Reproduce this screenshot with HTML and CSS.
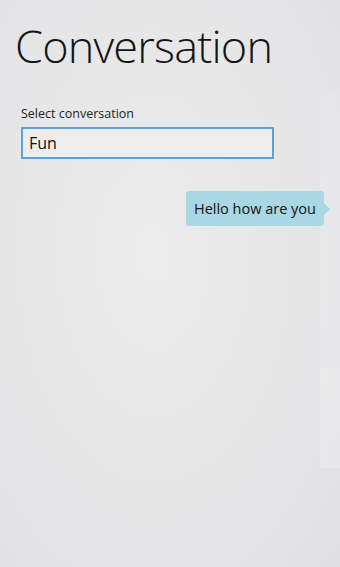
FILE: index.html
```html
<!DOCTYPE html>
<html lang="en">
<head>
    <meta charset="UTF-8">
    <meta name="viewport" content="width=device-width, initial-scale=1.0">
    <title>Conversation</title>
    <link rel="stylesheet" href="styles.css">
</head>
<body>
    <div class="page">
        <div class="side-strip"></div>
        <div class="side-strip lower"></div>
        <h1 class="title">Conversation</h1>
        <div class="picker">
            <label class="picker-label">Select conversation</label>
            <div class="picker-box">Fun</div>
        </div>
        <div class="messages">
            <div class="bubble">Hello how are you</div>
        </div>
    </div>
</body>
</html>
```

FILE: styles.css
```css
/* General styles */
html, body {
    margin: 0;
    padding: 0;
    height: 100%;
}
body {
    font-family: "Open Sans", "Noto Sans", sans-serif;
    color: #111;
    background: radial-gradient(ellipse at 45% 45%, #ececec 0%, #e5e5e7 70%, #e0e0e4 100%);
    overflow: hidden;
}
.page {
    position: relative;
    height: 567px;
    padding: 16px 0 0 15px;
    box-sizing: border-box;
}

/* faint panels at the right edge */
.side-strip {
    position: absolute;
    right: 0;
    top: 95px;
    width: 20px;
    height: 272px;
    background: rgba(255, 255, 255, 0.12);
}
.side-strip.lower {
    top: 367px;
    height: 101px;
    background: rgba(255, 255, 255, 0.2);
}

.title {
    margin: 0;
    font-size: 45px;
    font-weight: 350;
    line-height: 60px;
    letter-spacing: -0.8px;
    color: #151515;
}
.picker {
    margin: 29px 0 0 6px;
    width: 253px;
}
.picker-label {
    display: block;
    font-size: 12.5px;
    line-height: 18px;
    color: #222;
}
.picker-box {
    margin-top: 4px;
    height: 28px;
    border: 2px solid #5aa2dc;
    background: #ededee;
    padding: 0 6px;
    font-size: 16px;
    line-height: 28px;
    color: #111;
}
.messages {
    display: flex;
    justify-content: flex-end;
    margin-top: 32px;
    padding-right: 16px;
}
.bubble {
    position: relative;
    background: #a9d7e3;
    border-radius: 3px;
    padding: 0 8px;
    height: 35px;
    line-height: 35px;
    font-size: 14.5px;
    color: #151515;
}
.bubble::after {
    content: "";
    position: absolute;
    right: -6px;
    top: 12px;
    border-left: 6px solid #a9d7e3;
    border-top: 6px solid transparent;
    border-bottom: 6px solid transparent;
}
```
